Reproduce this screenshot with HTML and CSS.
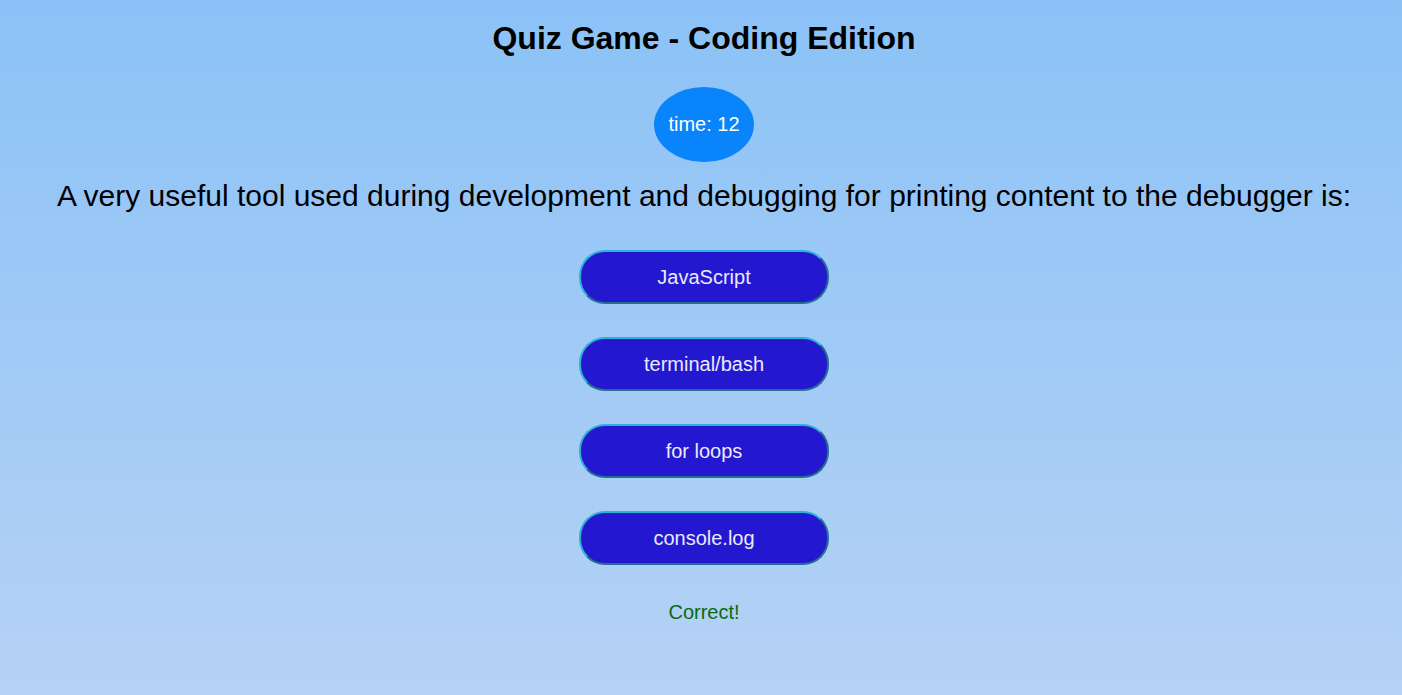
FILE: index.html
```html
<!DOCTYPE html>
<html lang="en">
<head>
<meta charset="utf-8">
<title>Quiz Game - Coding Edition</title>
<link rel="stylesheet" href="styles.css">
</head>
<body>
<main class="quiz">
  <h1 class="quiz-title">Quiz Game - Coding Edition</h1>
  <div class="timer">time: 12</div>
  <p class="question">A very useful tool used during development and debugging for printing content to the debugger is:</p>
  <div class="answers">
    <button class="answer">JavaScript</button>
    <button class="answer">terminal/bash</button>
    <button class="answer">for loops</button>
    <button class="answer">console.log</button>
  </div>
  <p class="feedback">Correct!</p>
</main>
</body>
</html>
```

FILE: styles.css
```css
html, body {
  margin: 0;
  padding: 0;
}

body {
  min-height: 695px;
  background: linear-gradient(to bottom, #8bc2f7 0%, #b6d2f5 100%);
  font-family: "Liberation Sans", Arial, sans-serif;
  color: #000;
}

.quiz {
  display: flex;
  flex-direction: column;
  align-items: center;
  padding-top: 20px;
  padding-left: 6px;
}

.quiz-title {
  margin: 0;
  font-size: 32px;
  font-weight: bold;
  line-height: 37px;
}

.timer {
  margin-top: 30px;
  width: 100px;
  height: 75px;
  border-radius: 50%;
  background: #0984fb;
  color: #fff;
  font-size: 20px;
  display: flex;
  align-items: center;
  justify-content: center;
}

.question {
  margin: 17px 0 0;
  font-size: 30px;
  line-height: 34px;
  text-align: center;
}

.answers {
  margin-top: 37px;
  display: flex;
  flex-direction: column;
  gap: 33px;
}

.answer {
  width: 250px;
  height: 54px;
  box-sizing: border-box;
  border-radius: 26px;
  border: 2px solid;
  border-color: #2bb3d6 #246f8f #246f8f #2bb3d6;
  background: #2318d0;
  color: #ece8fb;
  font-family: "Liberation Sans", Arial, sans-serif;
  font-size: 20px;
  padding: 0;
  cursor: pointer;
}

.feedback {
  margin: 36px 0 0;
  color: #0a6b12;
  font-size: 20px;
  line-height: 23px;
}
```
